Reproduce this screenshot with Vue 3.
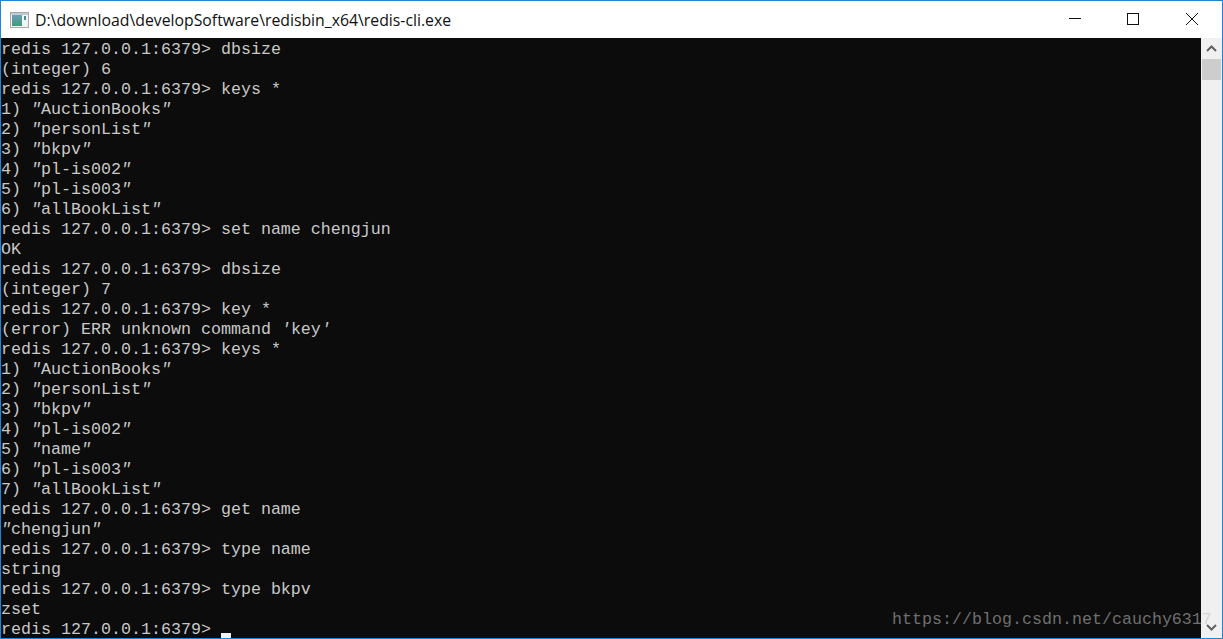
<script setup>
const raw = [
  'redis 127.0.0.1:6379> dbsize','(integer) 6','redis 127.0.0.1:6379> keys *','1) "AuctionBooks"','2) "personList"','3) "bkpv"','4) "pl-is002"','5) "pl-is003"','6) "allBookList"',
  'redis 127.0.0.1:6379> set name chengjun','OK','redis 127.0.0.1:6379> dbsize','(integer) 7','redis 127.0.0.1:6379> key *',"(error) ERR unknown command 'key'",'redis 127.0.0.1:6379> keys *',
  '1) "AuctionBooks"','2) "personList"','3) "bkpv"','4) "pl-is002"','5) "name"','6) "pl-is003"','7) "allBookList"','redis 127.0.0.1:6379> get name','"chengjun"','redis 127.0.0.1:6379> type name','string','redis 127.0.0.1:6379> type bkpv','zset'
]
const lines = raw.map(l => l.split(/(["'])/).filter(Boolean))
</script>

<template>
  <div class="window">
    <header class="titlebar">
      <svg class="appicon" width="19" height="16" viewBox="0 0 19 16">
        <defs>
          <linearGradient id="pane" x1="0" y1="0" x2="0" y2="1">
            <stop offset="0" stop-color="#6d9fb8"/>
            <stop offset="1" stop-color="#3f9a7c"/>
          </linearGradient>
        </defs>
        <rect x="0.5" y="0.5" width="18" height="15" fill="#f4f4f4" stroke="#a8a8a8"/>
        <rect x="1" y="1" width="17" height="2" fill="#c4ccd0"/>
        <rect x="2" y="3" width="10" height="11" fill="url(#pane)"/>
        <rect x="14" y="4" width="2" height="4" fill="#4f8798"/>
      </svg>
      <span class="title">D:\download\developSoftware\redisbin_x64\redis-cli.exe</span>
      <div class="controls">
        <svg width="12" height="12" viewBox="0 0 12 12"><path d="M0 5.5H12" stroke="#111" fill="none"/></svg>
        <svg width="12" height="12" viewBox="0 0 12 12"><rect x="0.5" y="0.5" width="11" height="11" stroke="#111" fill="none"/></svg>
        <svg class="close" width="12" height="12" viewBox="0 0 12 12"><path d="M0 0L12 12M12 0L0 12" stroke="#111" fill="none"/></svg>
      </div>
    </header>
    <main class="body">
      <div class="console">
        <div v-for="(segs, i) in lines" :key="i" class="line"><template v-for="(s, j) in segs" :key="j"><i v-if="s === '&quot;' || s === '\''" class="q">{{ s }}</i><template v-else>{{ s }}</template></template></div>
        <div class="line">redis 127.0.0.1:6379> <span class="cursor"></span></div>
      </div>
      <aside class="scrollbar">
        <svg class="arrow" width="21" height="21" viewBox="0 0 21 21"><path d="M6 13L10.5 8.5L15 13" stroke="#606060" stroke-width="2" fill="none"/></svg>
        <div class="thumb"></div>
        <div class="track"></div>
        <svg class="arrow" width="21" height="21" viewBox="0 0 21 21"><path d="M6 8L10.5 12.5L15 8" stroke="#606060" stroke-width="2" fill="none"/></svg>
      </aside>
      <div class="watermark">https://blog.csdn.net/cauchy631<span class="pale">7</span></div>
    </main>
  </div>
</template>

<style scoped>
.window {
  width: 1223px;
  height: 639px;
  box-sizing: border-box;
  border: 1px solid #1a86d8;
  display: flex;
  flex-direction: column;
  overflow: hidden;
  background: #fff;
}
.titlebar {
  height: 37px;
  flex: none;
  display: flex;
  align-items: center;
  padding-left: 9px;
}
.appicon { flex: none; margin-right: 6px; }
.title {
  font-family: "Open Sans", "Noto Sans", sans-serif;
  font-size: 15.8px;
  color: #111;
  white-space: nowrap;
}
.controls {
  margin-left: auto;
  display: flex;
  gap: 46px;
  padding-right: 24px;
  padding-bottom: 1px;
}
.controls svg { display: block; }
.controls .close { margin-left: 1px; }
.body {
  flex: 1;
  min-height: 0;
  display: flex;
  position: relative;
}
.console {
  flex: 1;
  min-width: 0;
  background: #0c0c0c;
  color: #c8c8c8;
  font-family: "Liberation Mono", monospace;
  font-size: 16.67px;
  overflow: hidden;
}
.line { height: 20px; line-height: 24px; white-space: pre; }
.q { font-style: italic; }
.cursor {
  display: inline-block;
  width: 10px;
  height: 5px;
  background: #f2f2f2;
  vertical-align: -4px;
}
.scrollbar {
  width: 21px;
  flex: none;
  background: #f0f0f0;
  display: flex;
  flex-direction: column;
  align-items: center;
}
.arrow { flex: none; display: block; }
.thumb { width: 19px; height: 21px; flex: none; background: #cdcdcd; }
.track { flex: 1; }
.watermark {
  position: absolute;
  left: 891px;
  top: 572px;
  color: #6f6f6f;
  font-family: "Liberation Mono", monospace;
  font-size: 16.67px;
  line-height: 20px;
  white-space: nowrap;
}
.pale { color: #d6d6d6; }
</style>
